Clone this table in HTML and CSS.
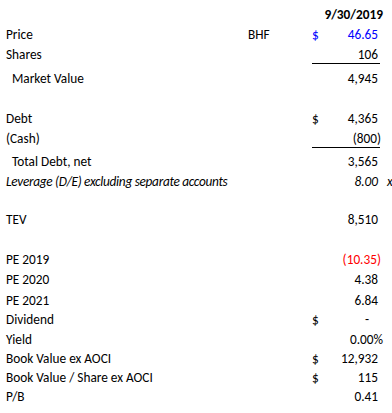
FILE: index.html
```html
<!DOCTYPE html>
<html lang="en">
<head>
<meta charset="utf-8">
<title>BHF valuation</title>
<link rel="stylesheet" href="styles.css">
</head>
<body>
<div class="sheet">
  <div class="row r24">
    <span class="label"></span><span class="tick"></span>
    <span class="val"><span></span><span class="num date">9/30/2019</span></span>
  </div>
  <div class="row">
    <span class="label">Price</span><span class="tick">BHF</span>
    <span class="val blue"><span class="cur">$</span><span class="num">46.65</span></span>
  </div>
  <div class="row">
    <span class="label">Shares</span><span class="tick"></span>
    <span class="val rule"><span></span><span class="num">106</span></span>
  </div>
  <div class="row r24">
    <span class="label indent">Market Value</span><span class="tick"></span>
    <span class="val"><span></span><span class="num">4,945</span></span>
  </div>
  <div class="row"></div>
  <div class="row">
    <span class="label">Debt</span><span class="tick"></span>
    <span class="val"><span class="cur">$</span><span class="num">4,365</span></span>
  </div>
  <div class="row">
    <span class="label">(Cash)</span><span class="tick"></span>
    <span class="val rule"><span></span><span class="num neg">(800)</span></span>
  </div>
  <div class="row r23">
    <span class="label indent">Total Debt, net</span><span class="tick"></span>
    <span class="val"><span></span><span class="num">3,565</span></span>
  </div>
  <div class="row italic">
    <span class="label">Leverage (D/E) excluding separate accounts</span><span class="tick"></span>
    <span class="val"><span></span><span class="num">8.00</span></span>
    <span class="unit">x</span>
  </div>
  <div class="row r18"></div>
  <div class="row">
    <span class="label">TEV</span><span class="tick"></span>
    <span class="val"><span></span><span class="num">8,510</span></span>
  </div>
  <div class="row"></div>
  <div class="row">
    <span class="label">PE 2019</span><span class="tick"></span>
    <span class="val red"><span></span><span class="num neg">(10.35)</span></span>
  </div>
  <div class="row">
    <span class="label">PE 2020</span><span class="tick"></span>
    <span class="val"><span></span><span class="num">4.38</span></span>
  </div>
  <div class="row r21">
    <span class="label">PE 2021</span><span class="tick"></span>
    <span class="val"><span></span><span class="num">6.84</span></span>
  </div>
  <div class="row r19">
    <span class="label">Dividend</span><span class="tick"></span>
    <span class="val"><span class="cur">$</span><span class="num dash">-</span></span>
  </div>
  <div class="row">
    <span class="label">Yield</span><span class="tick"></span>
    <span class="val"><span></span><span class="num pct">0.00%</span></span>
  </div>
  <div class="row r19">
    <span class="label">Book Value ex AOCI</span><span class="tick"></span>
    <span class="val"><span class="cur">$</span><span class="num">12,932</span></span>
  </div>
  <div class="row r19">
    <span class="label">Book Value / Share ex AOCI</span><span class="tick"></span>
    <span class="val"><span class="cur">$</span><span class="num">115</span></span>
  </div>
  <div class="row r19">
    <span class="label">P/B</span><span class="tick"></span>
    <span class="val"><span></span><span class="num">0.41</span></span>
  </div>
</div>
</body>
</html>
```

FILE: styles.css
```css
body {
  margin: 0;
  background: #ffffff;
  color: #000000;
  font-family: Carlito, Lato, "Liberation Sans", sans-serif;
  font-size: 13.3px;
}

.sheet {
  padding-left: 6px;
  overflow: hidden;
}

.row {
  display: grid;
  grid-template-columns: 242px 64px 68px 1fr;
  align-items: end;
  height: 20px;
}

.r18 { height: 18px; }
.r19 { height: 19px; }
.r21 { height: 21px; }
.r23 { height: 23px; }
.r24 { height: 24px; }

.row > span {
  line-height: 15px;
  padding-bottom: 2px;
  white-space: nowrap;
}

.indent { padding-left: 6px; }

.val {
  display: flex;
  justify-content: space-between;
  height: 100%;
  align-items: flex-end;
  box-sizing: border-box;
  padding-left: 0;
}

.val.rule {
  border-bottom: 1px solid #000000;
  padding-bottom: 1px;
}

.num { padding-right: 2px; }
.num.neg { margin-right: -3px; }
.num.pct { margin-right: -5px; }
.num.date { margin-right: -5px; font-weight: bold; }
.num.dash { padding-right: 11px; }

.blue { color: #0000ff; }
.red { color: #ff0000; }

.italic { font-style: italic; }
.italic .label { letter-spacing: -0.3px; }

.unit { padding-left: 7px; }
```
